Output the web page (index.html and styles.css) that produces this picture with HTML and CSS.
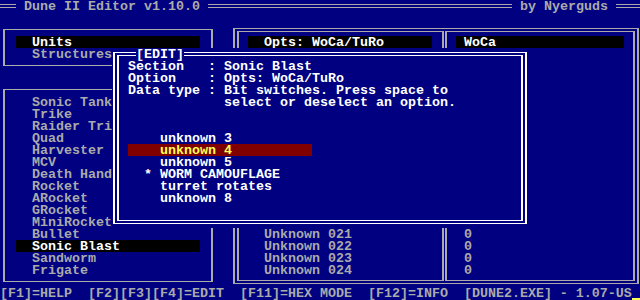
FILE: index.html
```html
<!DOCTYPE html>
<html>
<head lang="en">
    <meta charset="UTF-8">
    <title>Dune II Editor v1.10.0</title>
    <link rel="stylesheet" href="styles.css">
</head>
<body>
    <div id="screen">
        <!-- title bar -->
        <div class="dline" id="tl"></div>
        <div class="txt" id="title">Dune II Editor v1.10.0</div>
        <div class="dline" id="tm"></div>
        <div class="txt" id="author">by Nyerguds</div>
        <div class="dline" id="tr"></div>

        <!-- sections -->
        <div class="sbox" id="menu-box"></div>
        <ul class="list" id="menu">
            <li class="selected">Units</li>
            <li>Structures</li>
        </ul>

        <!-- units -->
        <div class="sbox" id="unit-box"></div>
        <ul class="list" id="units">
            <li>Sonic Tank</li>
            <li>Trike</li>
            <li>Raider Trike</li>
            <li>Quad</li>
            <li>Harvester</li>
            <li>MCV</li>
            <li>Death Hand</li>
            <li>Rocket</li>
            <li>ARocket</li>
            <li>GRocket</li>
            <li>MiniRocket</li>
            <li>Bullet</li>
            <li class="selected">Sonic Blast</li>
            <li>Sandworm</li>
            <li>Frigate</li>
        </ul>

        <!-- data -->
        <div class="dbox" id="data-box"><div class="dbox-in"></div></div>
        <div id="data-sep"></div>
        <div class="txt head" id="head-opt">Opts: WoCa/TuRo</div>
        <div class="txt head" id="head-val">WoCa</div>
        <ul class="rows" id="data-names">
            <li>Unknown 021</li>
            <li>Unknown 022</li>
            <li>Unknown 023</li>
            <li>Unknown 024</li>
        </ul>
        <ul class="rows" id="data-vals">
            <li>0</li>
            <li>0</li>
            <li>0</li>
            <li>0</li>
        </ul>

        <!-- edit dialog -->
        <div id="popup">
            <div class="dbox white" id="popup-frame"><div class="dbox-in"></div></div>
            <div class="txt" id="popup-title">[EDIT]</div>
            <div class="txt" id="popup-info">Section   : Sonic Blast
Option    : Opts: WoCa/TuRo
Data type : Bit switches. Press space to
            select or deselect an option.</div>
            <ul id="bits">
                <li><span class="mark"></span>unknown 3</li>
                <li class="current"><span class="mark"></span>unknown 4</li>
                <li><span class="mark"></span>unknown 5</li>
                <li><span class="mark">*</span>WORM CAMOUFLAGE</li>
                <li><span class="mark"></span>turret rotates</li>
                <li><span class="mark"></span>unknown 8</li>
            </ul>
        </div>

        <!-- status line -->
        <div id="status">[F1]=HELP  [F2][F3][F4]=EDIT  [F11]=HEX MODE  [F12]=INFO  [DUNE2.EXE] - 1.07-US</div>
        <div id="cursor"></div>
    </div>
</body>
</html>
```

FILE: styles.css
```css
*{
    margin: 0;
    padding: 0;
    box-sizing: border-box;
}
body{
    background: #000080;
}
ul{
    list-style: none;
}
#screen{
    display: grid;
    grid-template-columns: repeat(80, 8px);
    grid-template-rows: repeat(25, 12px);
    width: 640px;
    height: 300px;
    overflow: hidden;
    font: bold 13.333px/12px "Liberation Mono", monospace;
    color: #aaaaaa;
}
/* text cells sit one pixel lower, like the VGA font */
.txt, .list li, .rows li, #bits li{
    padding-top: 1px;
    white-space: pre;
}

/* title bar */
.dline{
    align-self: start;
    height: 4px;
    margin-top: 4px;
    border-top: 1px solid #aaaaaa;
    border-bottom: 1px solid #aaaaaa;
}
#tl{ grid-area: 1 / 1 / 2 / 3; }
#title{ grid-area: 1 / 4 / 2 / 26; }
#tm{ grid-area: 1 / 27 / 2 / 65; }
#author{ grid-area: 1 / 66 / 2 / 77; }
#tr{ grid-area: 1 / 78 / 2 / 81; }

/* frames */
.sbox{
    margin: 5px 3px 6px 3px;
    border: 1px solid #aaaaaa;
    border-left-width: 2px;
    border-right-width: 2px;
}
.dbox{
    margin: 4px 1px;
    padding: 2px;
    border: 1px solid #aaaaaa;
    border-left-width: 2px;
    border-right-width: 2px;
}
.dbox-in{
    height: 100%;
    border: 1px solid #aaaaaa;
    border-left-width: 2px;
    border-right-width: 2px;
}
.dbox.white, .dbox.white .dbox-in{
    border-color: #ffffff;
}

/* left lists */
#menu-box{ grid-area: 3 / 1 / 7 / 28; }
#unit-box{ grid-area: 8 / 1 / 25 / 28; }
#menu{ grid-area: 4 / 3 / 6 / 26; }
#units{ grid-area: 9 / 3 / 24 / 26; }
.list li{
    height: 12px;
    padding-left: 16px;
}
.list .selected, .head{
    background: #000000;
    color: #ffffff;
}

/* data panel */
#data-box{ grid-area: 3 / 30 / 25 / 81; }
#data-sep{
    grid-area: 3 / 56 / 25 / 57;
    margin: 7px 1px 7px 2px;
    border-left: 2px solid #aaaaaa;
    border-right: 2px solid #aaaaaa;
    background: #000080;
}
#head-opt{ grid-area: 4 / 32 / 5 / 55; padding-left: 16px; }
#head-val{ grid-area: 4 / 58 / 5 / 79; padding-left: 8px; }
#data-names{ grid-area: 20 / 34 / 24 / 46; }
#data-vals{ grid-area: 20 / 59 / 24 / 61; }
.rows li{
    height: 12px;
}

/* edit dialog */
#popup{
    grid-area: 5 / 15 / 20 / 67;
    z-index: 1;
    display: grid;
    grid-template-columns: repeat(52, 8px);
    grid-template-rows: repeat(15, 12px);
    background: #000080;
    color: #ffffff;
}
#popup-frame{ grid-area: 1 / 1 / 16 / 53; }
#popup-title{
    grid-area: 1 / 4 / 2 / 10;
    background: #000080;
}
#popup-info{
    grid-area: 2 / 3 / 6 / 48;
}
#bits{ grid-area: 8 / 3 / 14 / 26; }
#bits li{
    height: 12px;
    padding-left: 16px;
}
#bits .mark{
    display: inline-block;
    width: 16px;
}
#bits .current{
    background: #800000;
    color: #ffff55;
}

/* status line */
#status{
    grid-area: 25 / 1 / 26 / 80;
    white-space: pre;
}
#cursor{
    grid-area: 25 / 80 / 26 / 81;
    align-self: end;
    height: 2px;
    background: #ffff55;
}
```
